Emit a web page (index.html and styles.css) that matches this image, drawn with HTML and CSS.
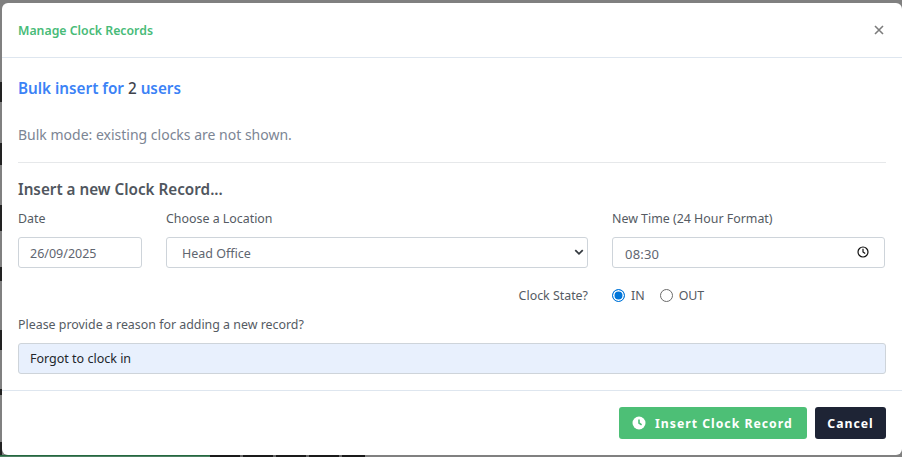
FILE: index.html
```html
<!DOCTYPE html>
<html lang="en">
<head>
<meta charset="utf-8">
<title>Manage Clock Records</title>
<link rel="stylesheet" href="styles.css">
</head>
<body>
<div class="backdrop">
  <div class="edge-left"><i class="spot s1"></i><i class="spot s2"></i><i class="spot s3"></i><i class="spot s4"></i><i class="spot s5"></i><i class="spot s6"></i><i class="spot s7"></i></div>
  <div class="edge-bottom"><i class="green"></i><i class="black"></i></div>
  <div class="modal">
    <header class="modal-header">
      <h5 class="modal-title">Manage Clock Records</h5>
      <svg class="close" viewBox="0 0 10 10" width="10" height="10"><path d="M1 1l8 8M9 1l-8 8"/></svg>
    </header>
    <main class="modal-body">
      <h4 class="bulk-title">Bulk insert for <span class="count">2</span> users</h4>
      <p class="bulk-note">Bulk mode: existing clocks are not shown.</p>
      <hr class="rule">
      <h5 class="section-title">Insert a new Clock Record...</h5>
      <div class="field-row">
        <div class="field f-date">
          <label class="label">Date</label>
          <div class="control control-nudge">26/09/2025</div>
        </div>
        <div class="field f-location">
          <label class="label">Choose a Location</label>
          <div class="control control-nudge control-select">
            <span>Head Office</span>
            <svg class="chevron" viewBox="0 0 16 16" width="10" height="10"><path d="M2 5l6 6 6-6"/></svg>
          </div>
        </div>
        <div class="field f-time">
          <label class="label">New Time (24 Hour Format)</label>
          <div class="control control-nudge control-time">
            <span class="time-value">08:30</span>
            <svg class="clock-line" viewBox="0 0 12 12" width="12" height="12"><circle cx="6" cy="6" r="5"/><path d="M6 2.8V6l2.2 1.6"/></svg>
          </div>
        </div>
      </div>
      <div class="state-row">
        <span class="state-label">Clock State?</span>
        <div class="radios">
          <span class="radio-item"><i class="radio checked"></i>IN</span>
          <span class="radio-item"><i class="radio"></i>OUT</span>
        </div>
      </div>
      <label class="label reason-label">Please provide a reason for adding a new record?</label>
      <div class="control control-filled">Forgot to clock in</div>
    </main>
    <footer class="modal-footer">
      <button class="btn btn-green">
        <svg class="clock-solid" viewBox="0 0 14 14" width="14" height="14"><circle cx="7" cy="7" r="6.5"/><path d="M7 3.4V7l2.6 1.8"/></svg>
        Insert Clock Record
      </button>
      <button class="btn btn-dark">Cancel</button>
    </footer>
  </div>
</div>
</body>
</html>
```

FILE: styles.css
```css
* { box-sizing: border-box; }
html, body { margin: 0; height: 100%; overflow: hidden; }
body { font-family: "Noto Sans", "Open Sans", sans-serif; font-size: 12px; color: #4a5058; }
.backdrop { position: relative; width: 902px; height: 457px; background: #808080; padding: 3px 0 2px 2px; display: flex; }
.edge-left .spot { position: absolute; left: 0; width: 2px; background: #222; }
.s1 { top: 82px; height: 20px; background: #3f4d5c; }
.s2 { top: 143px; height: 22px; background: #1c1c1c; }
.s3 { top: 205px; height: 26px; background: #4a5560; }
.s4 { top: 267px; height: 14px; background: #1c1c1c; }
.s5 { top: 330px; height: 20px; background: #666; }
.s6 { top: 389px; height: 6px; background: #555; }
.s7 { top: 442px; height: 15px; background: #24693f; }
.edge-bottom { position: absolute; left: 0; right: 0; bottom: 0; height: 2px; display: flex; }
.green { width: 210px; background: linear-gradient(#24693f 50%, #4f8064 50%); }
.black { width: 155px; background: repeating-linear-gradient(90deg, #1a1a1a 0 30px, #666 30px 33px); }
.modal { flex: 1; background: #fff; border-radius: 6px; display: flex; flex-direction: column; position: relative; }
.modal-header { height: 55px; border-bottom: 1px solid #dee6ef; padding: 0 18px 0 16px; display: flex; align-items: center; justify-content: space-between; flex: none; }
.modal-title { margin: 0; font-size: 12.3px; font-weight: 600; color: #48bb78; }
.close { stroke: #7c7c7c; stroke-width: 1.6; fill: none; }
.modal-body { flex: 1; padding: 0 16px; }
.bulk-title { margin: 20px 0 0; font-size: 15.25px; line-height: 21px; font-weight: 600; color: #3b82f6; }
.count { color: #3f444c; font-weight: 500; }
.bulk-note { margin: 25px 0 0; font-size: 14px; line-height: 21px; color: #7c8594; }
.rule { border: 0; border-top: 1px solid #e6e8ea; margin: 17px 0 0; }
.section-title { margin: 15px 0 0; font-size: 15.25px; line-height: 22px; font-weight: 600; color: #50565e; }
.field-row { display: flex; gap: 24px; margin-top: 10px; }
.label { display: block; font-size: 12.4px; line-height: 18px; color: #555b63; }
.f-date { width: 124px; }
.f-location { width: 422px; }
.f-time { width: 273px; }
.control { margin-top: 9px; height: 31px; border: 1px solid #ced4da; border-radius: 3px; padding: 0 11px; display: flex; align-items: center; justify-content: space-between; font-size: 12.5px; color: #5f6670; }
.control-nudge { padding-top: 2px; }
.control-nudge svg { margin-top: -3px; }
.control-select { padding-left: 15px; }
.chevron { stroke: #343a40; stroke-width: 2.8; fill: none; margin-right: -8px; }
.time-value { font-size: 13px; margin-left: 1px; letter-spacing: .2px; }
.clock-line { stroke: #111; stroke-width: 1.2; fill: none; margin-right: 4px; }
.state-row { display: flex; gap: 24px; margin-top: 18px; height: 18px; align-items: center; }
.state-label { width: 570px; text-align: right; font-size: 12.4px; color: #555b63; }
.radios { display: flex; gap: 15px; }
.radio-item { display: flex; align-items: center; gap: 6px; font-size: 12.4px; color: #555b63; }
.radio { width: 13px; height: 13px; border-radius: 50%; border: 1px solid #6b6b6b; background: #fff; display: block; }
.radio.checked { border: 1px solid #0075d9; box-shadow: inset 0 0 0 1.5px #fff; background: #0075d9; }
.reason-label { margin-top: 12px; }
.control-filled { margin-top: 9px; background: #e8f0fd; color: #22262b; border-color: #ced4da; }
.modal-footer { height: 65px; border-top: 1px solid #dee6ef; display: flex; gap: 8px; justify-content: flex-end; padding: 16px 16px 0 0; flex: none; }
.btn { height: 32px; border: 0; border-radius: 3px; font: 700 12.25px "Noto Sans", sans-serif; letter-spacing: 1px; color: #fff; display: flex; align-items: center; }
.btn-green { width: 188px; background: #4dbf76; padding-left: 13px; gap: 9px; }
.btn-dark { width: 71px; background: #1e2435; justify-content: center; }
.clock-solid circle { fill: #fff; }
.clock-solid path { stroke: #4dbf76; stroke-width: 1.6; fill: none; }
```
